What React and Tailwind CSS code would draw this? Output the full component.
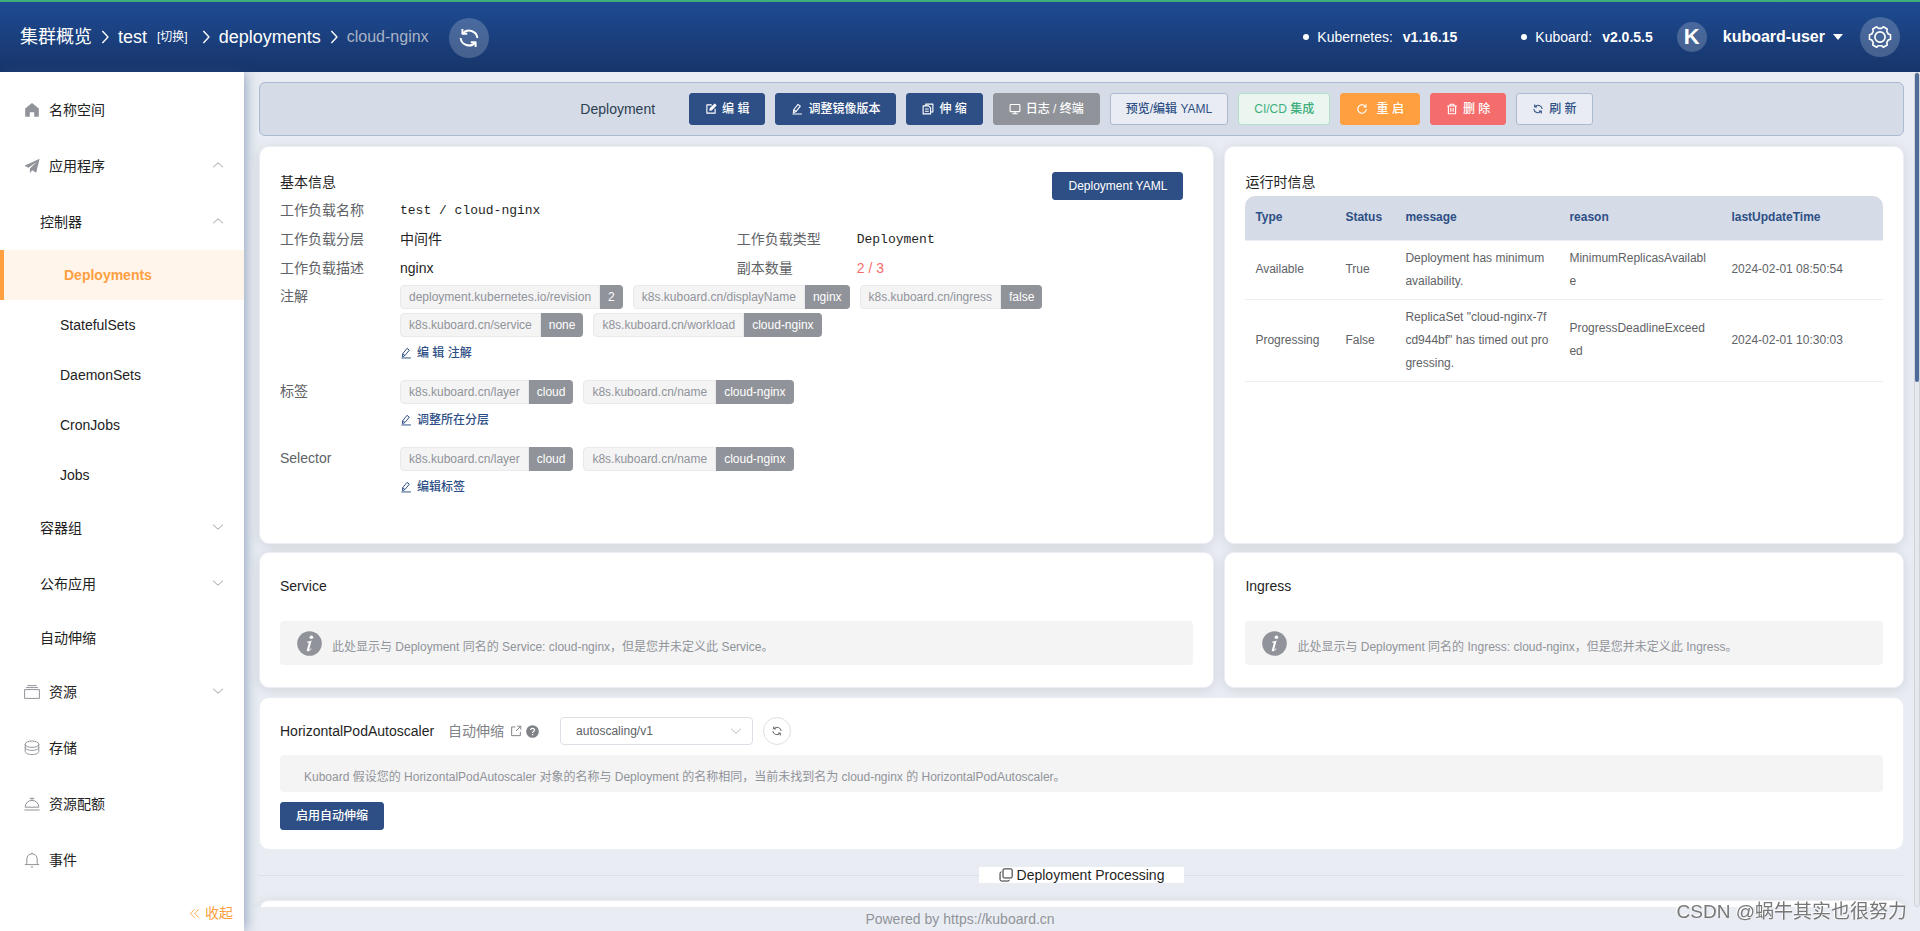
import clsx from "clsx";

const ICONS = {
  editOutline: (
    <>
      <path d="M9 2.5H2.5v11h11V7.5" />
      <path d="M6.5 9.5l.5-2.2L13 1.6l1.6 1.6-5.8 5.9-2.3.4z" fill="currentColor" />
    </>
  ),
  edit: (
    <>
      <path d="M3.2 13l.4-4L9.4 1.8l3 2.4L6.6 11.4 3.2 13z" />
      <path d="M3.6 9l3 2.4M2 14.6h12.5" />
    </>
  ),
  documentCopy: (
    <>
      <path d="M5 3.5V1.5h9.5v10.5h-3" />
      <path d="M1.5 3.8h7.2l2.8 2.7v8h-10z" />
      <path d="M4 8h5M4 11h5" />
    </>
  ),
  monitor: (
    <>
      <rect x="1.5" y="2" width="13" height="9.5" rx="1" />
      <path d="M8 11.5v2.7M4.5 14.3h7" />
    </>
  ),
  refreshRight: (
    <>
      <path d="M13.6 8A5.6 5.6 0 1 1 11.8 3.9" />
      <path d="M13.4 1.8v3.4H10" />
    </>
  ),
  remove: (
    <>
      <path d="M1.5 4h13M5.5 4V1.6h5V4M3.2 4v10.4h9.6V4M6.4 6.8v4.8M9.6 6.8v4.8" />
    </>
  ),
  refresh: (
    <>
      <path d="M3.6 2v3.2h3.2" />
      <path d="M3.8 5A5.6 5.6 0 0 1 13.6 8" />
      <path d="M12.4 14v-3.2H9.2" />
      <path d="M12.2 11A5.6 5.6 0 0 1 2.4 8" />
    </>
  ),
  home: <path d="M8 1L1.2 6.4v8.4h4.6v-4.6h4.4v4.6h4.6V6.4z" fill="currentColor" stroke="none" />,
  promotion: (
    <path
      d="M15.6.8L.4 7.8l4 2L12.6 4 5.9 10.6v4.6l2.3-2.9 4 2.4z"
      fill="currentColor"
      stroke="none"
    />
  ),
  box: <path d="M3.4 1.6h9.2M2 3.6h12M.6 5.6h14.8v8.8H.6z" />,
  coin: (
    <>
      <ellipse cx="8" cy="4.2" rx="6.8" ry="3.2" />
      <path d="M1.2 4.2v3c0 1.8 3 3.2 6.8 3.2s6.8-1.4 6.8-3.2v-3M1.2 7.2v4.2c0 1.8 3 3.2 6.8 3.2s6.8-1.4 6.8-3.2V7.2" />
    </>
  ),
  dish: <path d="M5.6 2.4h4.8M8 2.4v2M1.2 11.2a6.8 6.8 0 0 1 13.6 0zM.4 14h15.2" />,
  bell: <path d="M.8 12.6h14.4M2.8 12.6V7a5.2 5.2 0 0 1 10.4 0v5.6M8 1.8V.6M6.8 15h2.4" />,
  up: <path d="M1.5 11L8 5l6.5 6" />,
  down: <path d="M1.5 5L8 11l6.5-6" />,
  right: <path d="M5 1.2L11.4 8 5 14.8" />,
  collapse: <path d="M8 1.8L2 8l6 6.2M14.4 1.8L8.4 8l6 6.2" />,
  external: <path d="M7 2.6H2.2v11.6h11.6V9M9.8 1.6h4.6v4.6M14.2 1.8L8 8" />,
  copy: (
    <>
      <rect x="4.6" y="1" width="10.4" height="10.4" rx="1.2" />
      <path d="M2.8 4.4a1.6 1.6 0 0 0-1.6 1.6v7.4c0 .9.6 1.5 1.5 1.5h7.6a1.5 1.5 0 0 0 1.5-1.4" />
    </>
  ),
  setting: (
    <>
      <path d="M15 6.5v3L13.5 10l-1 1.8.3 1.5-2.6 1.5L9 13.8H7l-1.2 1-2.6-1.5.3-1.5-1-1.8L1 9.5v-3L2.5 6l1-1.8-.3-1.5 2.6-1.5L7 2.2h2l1.2-1 2.6 1.5-.3 1.5 1 1.8z" />
      <circle cx="8" cy="8" r="3.4" />
    </>
  ),
};

function Icon({ name, className = "size-3", strokeWidth = 1.3 }) {
  return (
    <svg
      className={clsx("shrink-0", className)}
      viewBox="0 0 16 16"
      fill="none"
      stroke="currentColor"
      strokeWidth={strokeWidth}
      strokeLinejoin="round"
      aria-hidden
    >
      {ICONS[name]}
    </svg>
  );
}

const BUTTON_STYLES = {
  primary: "bg-[#2e4f85] border-[#2e4f85] text-white",
  info: "bg-[#909399] border-[#909399] text-white",
  plain: "bg-[#e9edf3] border-[#abb9d1] text-[#2e4f85]",
  success: "bg-[#ebf6f1] border-[#b1dfc9] text-[#3eaf7c]",
  warning: "bg-[#ff9f40] border-[#ff9f40] text-white",
  danger: "bg-[#f56c6c] border-[#f56c6c] text-white",
};

function Button({ kind = "primary", icon, className = "h-8 px-[15px]", children }) {
  return (
    <button
      type="button"
      className={clsx(
        "flex items-center gap-[5px] rounded-[3px] border text-xs font-medium whitespace-pre",
        BUTTON_STYLES[kind],
        className
      )}
    >
      {icon && <Icon name={icon} strokeWidth={1.5} />}
      {children}
    </button>
  );
}

function Header() {
  return (
    <header className="flex h-[72px] shrink-0 items-center border-t-2 border-[#3eaf7c] bg-linear-to-b from-[#1e4b93] to-[#17356a] px-5 text-white">
      <nav className="flex items-center text-lg">
        <a href="#cluster">集群概览</a>
        <Icon name="right" className="mx-[6px] size-[14px]" strokeWidth={1.6} />
        <a href="#test">test</a>
        <a href="#switch" className="ml-[10px] text-xs">
          [切换]
        </a>
        <Icon name="right" className="mr-[6px] ml-[11px] size-[14px]" strokeWidth={1.6} />
        <a href="#deployments">deployments</a>
        <Icon name="right" className="mx-[6px] size-[14px]" strokeWidth={1.6} />
        <span className="text-base text-[#a9b3c4]">cloud-nginx</span>
      </nav>
      <button
        type="button"
        aria-label="刷新"
        className="mt-[2px] ml-5 flex size-10 items-center justify-center rounded-full bg-white/20"
      >
        <Icon name="refresh" className="size-6" strokeWidth={1.3} />
      </button>

      <div className="ml-auto flex items-center text-sm">
        <Version label="Kubernetes:" value="v1.16.15" />
        <Version label="Kuboard:" value="v2.0.5.5" />
        <span className="ml-6 flex size-[30px] items-center justify-center rounded-full bg-white/20 text-[22px] font-bold">
          K
        </span>
        <button type="button" className="ml-4 flex items-center gap-2 text-base font-bold">
          kuboard-user
          <svg className="h-[6px] w-[10px]" viewBox="0 0 10 6" fill="currentColor" aria-hidden>
            <path d="M0 0h10L5 6z" />
          </svg>
        </button>
        <button
          type="button"
          aria-label="设置"
          className="ml-[17px] flex size-10 items-center justify-center rounded-full bg-white/20"
        >
          <Icon name="setting" className="size-6" strokeWidth={1.1} />
        </button>
      </div>
    </header>
  );
}

function Version({ label, value }) {
  return (
    <span className="ml-16 flex items-center">
      <span className="mr-2 size-[6px] rounded-full bg-white" />
      {label}
      <b className="ml-[10px]">{value}</b>
    </span>
  );
}

const MENU = [
  { label: "名称空间", icon: "home" },
  { label: "应用程序", icon: "promotion", arrow: "up" },
  { label: "控制器", level: 2, arrow: "up" },
  { label: "Deployments", level: 3, active: true },
  { label: "StatefulSets", level: 3 },
  { label: "DaemonSets", level: 3 },
  { label: "CronJobs", level: 3 },
  { label: "Jobs", level: 3 },
  { label: "容器组", level: 2, arrow: "down" },
  { label: "公布应用", level: 2, arrow: "down" },
  { label: "自动伸缩", level: 2, leaf: true },
  { label: "资源", icon: "box", arrow: "down" },
  { label: "存储", icon: "coin" },
  { label: "资源配额", icon: "dish" },
  { label: "事件", icon: "bell" },
];

function Sidebar() {
  return (
    <aside className="z-10 flex w-[244px] shrink-0 flex-col bg-white shadow-[2px_0_12px_rgba(46,79,133,0.45)]">
      <nav className="pt-[10px] text-sm text-[#222]">
        {MENU.map((item) => (
          <a
            key={item.label}
            href={`#${item.label}`}
            className={clsx(
              "flex items-center pr-5",
              item.level === 3 && "h-[50px] pl-[60px]",
              item.level === 2 && "pl-10",
              !item.level && "pl-6",
              item.level !== 3 && (item.leaf ? "h-[52px]" : "h-14"),
              item.active && "border-l-4 border-[#ff9f40] bg-[#fff5eb] font-bold text-[#ff9f40]"
            )}
          >
            {item.icon && <Icon name={item.icon} className="mr-[9px] size-4 text-[#909399]" strokeWidth={1} />}
            {item.label}
            {item.arrow && (
              <Icon name={item.arrow} className="mb-[2px] ml-auto size-3 text-[#909399]" strokeWidth={1.2} />
            )}
          </a>
        ))}
      </nav>
      <button
        type="button"
        className="mt-auto flex h-9 items-center justify-end gap-[5px] pr-[11px] text-sm text-[#ff9f40]"
      >
        <Icon name="collapse" className="size-[11px]" strokeWidth={1.3} />
        收起
      </button>
    </aside>
  );
}

function Toolbar() {
  return (
    <div className="flex min-h-[54px] flex-wrap items-center justify-center gap-[10px] rounded-md border border-[#abb9d1] bg-[#d5dbe7] pl-[10px]">
      <span className="mr-6 text-sm text-[#2c3e50]">Deployment</span>
      <Button icon="editOutline">编 辑</Button>
      <Button icon="edit">调整镜像版本</Button>
      <Button icon="documentCopy">伸 缩</Button>
      <Button kind="info" icon="monitor">日志 / 终端</Button>
      <Button kind="plain">预览/编辑 YAML</Button>
      <Button kind="success">CI/CD 集成</Button>
      <Button kind="warning" icon="refreshRight">{" 重 启"}</Button>
      <Button kind="danger" icon="remove">删 除</Button>
      <Button kind="plain" icon="refresh">刷 新</Button>
    </div>
  );
}

function Card({ className, flat, children }) {
  return (
    <section
      className={clsx(
        "rounded-[10px] border border-[#ebeef5] bg-white px-5",
        !flat && "shadow-[0_2px_12px_rgba(0,0,0,0.1)]",
        className
      )}
    >
      {children}
    </section>
  );
}

function CardTitle({ children }) {
  return <h2 className="text-sm leading-5 text-[#1f1f1f]">{children}</h2>;
}

function Field({ label, children }) {
  return (
    <div className="flex h-[29px] flex-1 items-center">
      <span className="w-[120px] shrink-0 text-[#606266]">{label}</span>
      <span className="text-[#1f1f1f]">{children}</span>
    </div>
  );
}

function Tag({ name, value }) {
  return (
    <span className="flex h-6 text-xs leading-[22px]">
      <span className="rounded-l border border-[#e9e9eb] bg-[#f4f4f5] px-2 text-[#909399]">{name}</span>
      <span className="rounded-r border-y border-[#909399] bg-[#909399] px-2 font-medium text-white">{value}</span>
    </span>
  );
}

function TagRow({ label, tags, action }) {
  return (
    <div className="mb-[11px] flex">
      <span className="w-[120px] shrink-0 leading-[22px] text-[#606266]">{label}</span>
      <div className="max-w-[700px]">
        <div className="flex flex-wrap gap-x-[10px] gap-y-1">
          {tags.map(([name, value]) => (
            <Tag key={name} name={name} value={value} />
          ))}
        </div>
        <button type="button" className="flex h-8 items-center gap-[5px] text-xs font-medium text-[#2e4f85]">
          <Icon name="edit" />
          {action}
        </button>
      </div>
    </div>
  );
}

const ANNOTATIONS = [
  ["deployment.kubernetes.io/revision", "2"],
  ["k8s.kuboard.cn/displayName", "nginx"],
  ["k8s.kuboard.cn/ingress", "false"],
  ["k8s.kuboard.cn/service", "none"],
  ["k8s.kuboard.cn/workload", "cloud-nginx"],
];

const LABELS = [
  ["k8s.kuboard.cn/layer", "cloud"],
  ["k8s.kuboard.cn/name", "cloud-nginx"],
];

function BasicInfo() {
  return (
    <Card className="flex-1 pt-[25px] pb-[29px]">
      <div className="flex h-[23px] items-start justify-between">
        <CardTitle>基本信息</CardTitle>
        <Button className="mr-[10px] h-7 px-[15px]">Deployment YAML</Button>
      </div>
      <div className="text-sm">
        <Field label="工作负载名称">
          <span className="font-['Liberation_Mono',monospace] text-[13px]">test / cloud-nginx</span>
        </Field>
        <div className="flex">
          <Field label="工作负载分层">中间件</Field>
          <Field label="工作负载类型">
            <span className="font-['Liberation_Mono',monospace] text-[13px]">Deployment</span>
          </Field>
        </div>
        <div className="mb-[3px] flex">
          <Field label="工作负载描述">nginx</Field>
          <Field label="副本数量">
            <span className="text-[#f56c6c]">2 / 3</span>
          </Field>
        </div>
        <TagRow label="注解" tags={ANNOTATIONS} action="编 辑 注解" />
        <TagRow label="标签" tags={LABELS} action="调整所在分层" />
        <TagRow label="Selector" tags={LABELS} action="编辑标签" />
      </div>
    </Card>
  );
}

const CONDITIONS = [
  ["Available", "True", "Deployment has minimum availability.", "MinimumReplicasAvailable", "2024-02-01 08:50:54"],
  [
    "Progressing",
    "False",
    'ReplicaSet "cloud-nginx-7fcd944bf" has timed out progressing.',
    "ProgressDeadlineExceeded",
    "2024-02-01 10:30:03",
  ],
];

function RuntimeInfo() {
  return (
    <Card className="flex-1 pt-[25px]">
      <div className="h-6">
        <CardTitle>运行时信息</CardTitle>
      </div>
      <div className="overflow-hidden rounded-t-[10px]">
        <table className="w-full table-fixed text-left text-xs leading-[23px]">
          <colgroup>
            <col className="w-[90px]" />
            <col className="w-[60px]" />
            <col className="w-[164px]" />
            <col className="w-[162px]" />
            <col />
          </colgroup>
          <thead className="bg-[#d5dbe7] text-[#2e4f85]">
            <tr className="h-11 border-b border-[#ebeef5]">
              {["Type", "Status", "message", "reason", "lastUpdateTime"].map((title) => (
                <th key={title} className="px-[10px] font-bold">
                  {title}
                </th>
              ))}
            </tr>
          </thead>
          <tbody className="text-[#606266]">
            {CONDITIONS.map((row) => (
              <tr key={row[0]} className="border-b border-[#ebeef5]">
                {row.map((cell) => (
                  <td key={cell} className="px-[10px] py-[6px] break-all">
                    {cell}
                  </td>
                ))}
              </tr>
            ))}
          </tbody>
        </table>
      </div>
    </Card>
  );
}

function MissingCard({ title }) {
  return (
    <Card className="flex-1 pt-[23px] pb-[22px]">
      <CardTitle>{title}</CardTitle>
      <div className="mt-[25px] flex h-11 items-center rounded bg-[#f4f4f5] px-[17px] text-xs text-[#909399]">
        <svg className="mr-[10px] size-[25px] shrink-0" viewBox="0 0 25 25" aria-hidden>
          <circle cx="12.5" cy="12.5" r="12.3" fill="#909399" />
          <circle cx="14.4" cy="6.2" r="1.8" fill="#fff" />
          <path d="M10 10.8c1.8-.2 3-.6 4.7-1.2l-2.6 8.8c-.2.8.6.4 1.9-1.1l.5.4c-1.4 2.2-5.2 4-4.6 1.2l1.8-6.3c.2-.9-.2-1.1-1.8-1.2z" fill="#fff" />
        </svg>
        <p className="pt-2">
          此处显示与 Deployment 同名的 {title}: cloud-nginx，但是您并未定义此 {title}。
        </p>
      </div>
    </Card>
  );
}

function Autoscaler() {
  return (
    <Card flat className="mt-[9px] py-[19px]">
      <div className="flex items-center">
        <CardTitle>HorizontalPodAutoscaler</CardTitle>
        <a href="#hpa" className="ml-[14px] flex items-center gap-[6px] text-sm text-[#7f8287]">
          自动伸缩
          <Icon name="external" />
        </a>
        <svg className="ml-1 size-[13px]" viewBox="0 0 16 16" aria-hidden>
          <circle cx="8" cy="8" r="7.8" fill="#7f8287" />
          <path d="M5.6 6.3c0-3 4.9-3 4.9-.1 0 1.6-2.4 1.7-2.4 3.6M8.1 11v1.6" fill="none" stroke="#fff" strokeWidth="1.5" />
        </svg>
        <div className="relative ml-[21px]">
          <select
            aria-label="API 版本"
            className="h-7 w-[193px] appearance-none rounded border border-[#dcdfe6] bg-white pl-[15px] text-xs text-[#606266]"
          >
            <option>autoscaling/v1</option>
          </select>
          <Icon
            name="down"
            className="pointer-events-none absolute top-2 right-[11px] size-3 text-[#b4b8c0]"
          />
        </div>
        <button
          type="button"
          aria-label="刷新"
          className="ml-[10px] flex size-7 items-center justify-center rounded-full border border-[#dcdfe6] text-[#606266]"
        >
          <Icon name="refresh" />
        </button>
      </div>
      <p className="mt-[10px] flex h-[37px] items-center rounded bg-[#f4f4f5] px-6 pt-[6px] text-xs text-[#909399]">
        Kuboard 假设您的 HorizontalPodAutoscaler 对象的名称与 Deployment 的名称相同，当前未找到名为 cloud-nginx 的
        HorizontalPodAutoscaler。
      </p>
      <Button className="mt-[10px] h-7 px-[15px]">启用自动伸缩</Button>
    </Card>
  );
}

function Row({ className, left, right }) {
  return (
    <div className={clsx("-mx-[5px] flex", className)}>
      <div className="flex w-7/12 px-[5px]">{left}</div>
      <div className="flex w-5/12 px-[5px]">{right}</div>
    </div>
  );
}

export default function App() {
  return (
    <div
      lang="zh-CN"
      className="flex h-screen flex-col overflow-hidden bg-[#e9edf3] font-['Liberation_Sans','Noto_Sans_CJK_SC',sans-serif]"
    >
      <Header />
      <div className="flex min-h-0 flex-1">
        <Sidebar />
        <div className="flex min-w-0 flex-1 flex-col">
          <div className="flex min-h-0 flex-1">
            <main className="min-w-0 flex-1 overflow-y-auto pt-[10px] pr-[10px] pl-[15px] [scrollbar-width:none]">
              <Toolbar />
              <Row className="mt-[10px]" left={<BasicInfo />} right={<RuntimeInfo />} />
              <Row className="mt-2" left={<MissingCard title="Service" />} right={<MissingCard title="Ingress" />} />
              <Autoscaler />
              <div className="my-[17px] flex items-center">
                <span className="h-px flex-1 bg-[#dcdfe6]" />
                <h2 className="flex h-4 items-center gap-1 bg-white px-5 text-sm text-[#1f1f1f]">
                  <Icon name="copy" className="size-[14px]" strokeWidth={1.1} />
                  Deployment Processing
                </h2>
                <span className="h-px flex-1 bg-[#dcdfe6]" />
              </div>
              <Card className="h-40" />
            </main>
            <div className="w-[6px] shrink-0 rounded border border-[#cfd4dc] bg-[#e6e9ee]">
              <div className="h-[309px] rounded bg-[#4f6b99]" />
            </div>
          </div>
          {/* padding offsets the sidebar so the text centres on the window */}
          <footer className="flex h-6 shrink-0 items-center justify-center gap-1 pr-[244px] text-sm text-[#909399]">
            <span>Powered by</span>
            <a href="https://kuboard.cn">https://kuboard.cn</a>
          </footer>
        </div>
      </div>
      <span className="fixed right-[13px] bottom-[5px] text-[19px] text-[#777] [text-shadow:-1px_-1px_0_#fff]">
        CSDN @蜗牛其实也很努力
      </span>
    </div>
  );
}
